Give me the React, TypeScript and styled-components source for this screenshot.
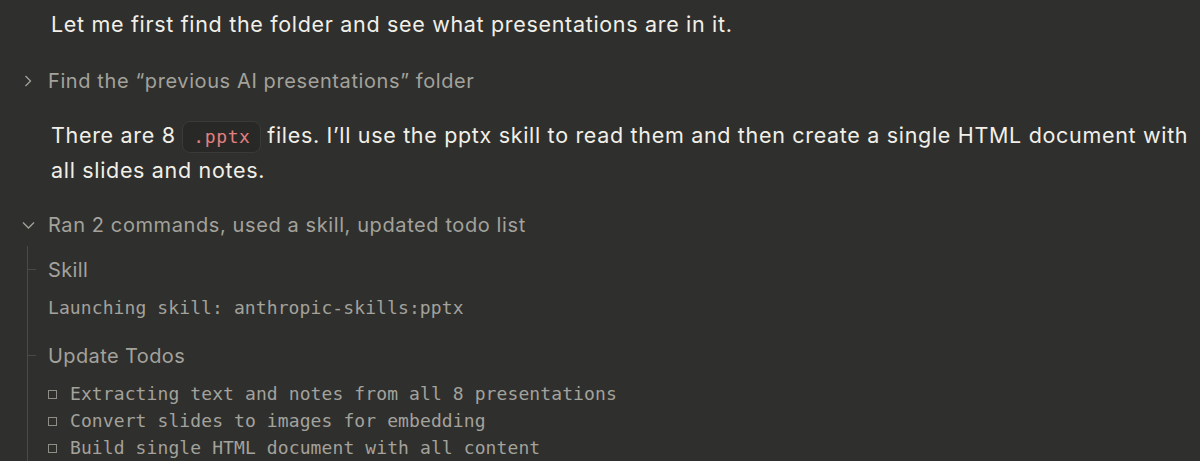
import React from "react";
import styled, { createGlobalStyle } from "styled-components";

const Global = createGlobalStyle`
  html, body { margin: 0; padding: 0; background: #2f2f2d; }
  body { font-family: "Inter", "Noto Sans", sans-serif; -webkit-font-smoothing: antialiased; }
`;

const Page = styled.div`
  width: 1200px;
  height: 461px;
  overflow: hidden;
  background: #2f2f2d;
  display: flex;
  flex-direction: column;
`;

const Message = styled.p<{ $top: number }>`
  margin: ${(p) => p.$top}px 0 0 0;
  padding: 0 0 0 51px;
  font-size: 21.5px;
  line-height: 34px;
  color: #f1efe8;
  letter-spacing: 0.68px;
`;

const Code = styled.code`
  display: inline-block;
  font-family: "DejaVu Sans Mono", "Liberation Mono", monospace;
  font-size: 18px;
  line-height: 30px;
  letter-spacing: 0.6px;
  color: #e27f80;
  background: #282826;
  border: 1px solid #3a3a37;
  border-radius: 8px;
  padding: 0 9px 0 10px;
  margin: 0;
`;

const Toggle = styled.div<{ $top: number }>`
  margin-top: ${(p) => p.$top}px;
  display: flex;
  align-items: center;
  height: 34px;
  color: #a3a29c;
  font-size: 20px;
  letter-spacing: 0.6px;
`;

const Chevron = styled.span`
  width: 48px;
  flex: none;
  display: flex;
  box-sizing: border-box;
  svg { display: block; }
`;

const Tree = styled.div`
  margin-left: 27px;
  margin-top: 6px;
  border-left: 1px solid #4a4a46;
  display: flex;
  flex-direction: column;
  flex: 1;
`;

const Section = styled.div<{ $top: number }>`
  margin-top: ${(p) => p.$top}px;
  display: flex;
  flex-direction: column;
`;

const SectionTitle = styled.div`
  position: relative;
  padding-left: 20px;
  height: 30px;
  line-height: 30px;
  font-size: 20px;
  color: #a3a29c;
  letter-spacing: 0.4px;
  &::before {
    content: "";
    position: absolute;
    left: 0;
    top: 14px;
    width: 8px;
    height: 1px;
    background: #4a4a46;
  }
`;

const Mono = styled.div<{ $top: number }>`
  margin-top: ${(p) => p.$top}px;
  padding-left: 20px;
  font-family: "DejaVu Sans Mono", "Liberation Mono", monospace;
  font-size: 18px;
  line-height: 27px;
  letter-spacing: 0.1px;
  color: #a3a29c;
  white-space: pre;
`;

const TodoList = styled.ul`
  list-style: none;
  margin: 9px 0 0 0;
  padding: 0 0 0 20px;
`;

const Todo = styled.li`
  display: flex;
  align-items: center;
  height: 27px;
  font-family: "DejaVu Sans Mono", "Liberation Mono", monospace;
  font-size: 18px;
  letter-spacing: 0.1px;
  color: #a3a29c;
  white-space: pre;
`;

const Box = styled.span`
  width: 7px;
  height: 7px;
  border: 1px solid #8e8d88;
  margin: 2px 13px 0 0;
  flex: none;
`;

const ChevronRight = () => (
  <svg width="8" height="12" viewBox="0 0 8 12" fill="none" style={{ marginLeft: 24 }}>
    <path d="M1.5 1 L6.5 6 L1.5 11" stroke="#a3a29c" strokeWidth="1.3" />
  </svg>
);

const ChevronDown = () => (
  <svg width="13" height="8" viewBox="0 0 13 8" fill="none" style={{ marginLeft: 22 }}>
    <path d="M1 1.5 L6.5 7 L12 1.5" stroke="#a3a29c" strokeWidth="1.3" />
  </svg>
);

export default function App() {
  return (
    <>
      <Global />
      <Page>
        <Message $top={7}>Let me first find the folder and see what presentations are in it.</Message>
        <Toggle $top={24}>
          <Chevron><ChevronRight /></Chevron>
          Find the “previous AI presentations” folder
        </Toggle>
        <Message $top={22}>
          There are 8 <Code>.pptx</Code> files. I’ll use the pptx skill to read them and then create a single HTML document with all slides and notes.
        </Message>
        <Toggle $top={22}>
          <Chevron><ChevronDown /></Chevron>
          Ran 2 commands, used a skill, updated todo list
        </Toggle>
        <Tree>
          <Section $top={9}>
            <SectionTitle>Skill</SectionTitle>
            <Mono $top={9}>Launching skill: anthropic-skills:pptx</Mono>
          </Section>
          <Section $top={20}>
            <SectionTitle>Update Todos</SectionTitle>
            <TodoList>
              <Todo><Box />Extracting text and notes from all 8 presentations</Todo>
              <Todo><Box />Convert slides to images for embedding</Todo>
              <Todo><Box />Build single HTML document with all content</Todo>
            </TodoList>
          </Section>
        </Tree>
      </Page>
    </>
  );
}
